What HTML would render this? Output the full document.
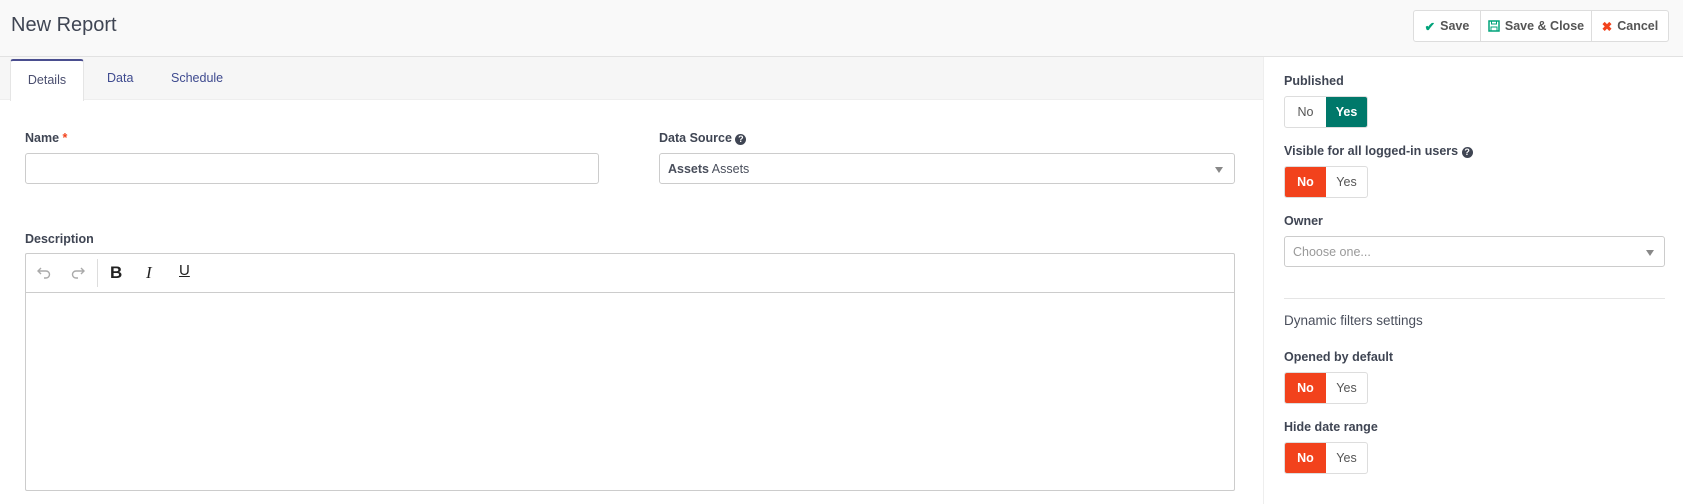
<!DOCTYPE html>
<html><head><style>
*{box-sizing:border-box;margin:0;padding:0}
body{width:1683px;height:504px;overflow:hidden;background:#fff;font-family:"Liberation Sans",sans-serif;color:#4a4f5c;position:relative}
.a{position:absolute}
.lbl{position:absolute;font-size:12.5px;font-weight:bold;color:#3f4553}
.inp{position:absolute;border:1px solid #ccc;border-radius:3px;background:#fff}
.tg{position:absolute;width:84px;height:32px;border:1px solid #ddd;border-radius:3px;display:flex;font-size:12.5px;overflow:hidden}
.tg span{flex:1;display:flex;align-items:center;justify-content:center;color:#555}
.tg .r{background:#f2421c;color:#fff;font-weight:bold}
.tg .g{background:#00786a;color:#fff;font-weight:bold}
.caret{position:absolute;width:0;height:0;border-left:4px solid transparent;border-right:4px solid transparent;border-top:6px solid #888}
.q{display:inline-block;width:11px;height:11px;border-radius:50%;background:#3f4553;color:#fff;font-size:9px;text-align:center;line-height:11px;vertical-align:0}
</style></head><body>
<div class="a" style="left:0;top:0;width:1683px;height:57px;background:#f9f9f9;border-bottom:1px solid #e2e2e2"></div>
<div class="a" style="left:11px;top:14px;font-size:20px;color:#3f4553">New Report</div>
<div class="a" style="left:1413px;top:10px;width:256px;height:32px;border:1px solid #ddd;border-radius:3px;background:#fff;display:flex;font-size:12.5px;font-weight:bold;color:#555">
 <div style="width:67px;border-right:1px solid #ddd;display:flex;align-items:center;justify-content:center"><span style="color:#00a37a;margin-right:5px">✔</span>Save</div>
 <div style="width:111px;border-right:1px solid #ddd;display:flex;align-items:center;justify-content:center"><svg width="12" height="12" viewBox="0 0 12 12" style="margin-right:5px"><rect x="1" y="1" width="10" height="10" fill="none" stroke="#00a37a" stroke-width="1.5"/><rect x="3.5" y="1" width="5" height="3" fill="none" stroke="#00a37a"/><rect x="3" y="7" width="6" height="4" fill="none" stroke="#00a37a"/></svg>Save &amp; Close</div>
 <div style="flex:1;display:flex;align-items:center;justify-content:center"><span style="color:#f2421c;margin-right:5px">✖</span>Cancel</div>
</div>
<div class="a" style="left:0;top:57px;width:1263px;height:43px;background:#f6f6f6;border-bottom:1px solid #eee"></div>
<div class="a" style="left:10px;top:59px;width:74px;height:42px;background:#fff;border:1px solid #e5e5e5;border-bottom:none;border-top:2px solid #4a4e8f;border-radius:3px 3px 0 0;display:flex;align-items:center;justify-content:center;font-size:12.5px;color:#4a4e6f;padding-bottom:2px">Details</div>
<div class="a" style="left:107px;top:71px;font-size:12.5px;color:#3e4a8f">Data</div>
<div class="a" style="left:171px;top:71px;font-size:12.5px;color:#3e4a8f">Schedule</div>
<div class="a" style="left:1263px;top:57px;width:1px;height:447px;background:#eee"></div>

<div class="lbl" style="left:25px;top:131px">Name <span style="color:#f2421c">*</span></div>
<div class="inp" style="left:25px;top:153px;width:574px;height:31px"></div>
<div class="lbl" style="left:659px;top:131px">Data Source <span class="q">?</span></div>
<div class="inp" style="left:659px;top:153px;width:576px;height:31px;font-size:12.5px;padding:8px 0 0 8px"><b>Assets</b> Assets</div>
<div class="caret" style="left:1215px;top:167px"></div>

<div class="lbl" style="left:25px;top:232px">Description</div>
<div class="inp" style="left:25px;top:253px;width:1210px;height:238px;border-radius:2px"></div>
<div class="a" style="left:25px;top:292px;width:1210px;height:1px;background:#ccc"></div>
<div class="a" style="left:97px;top:259px;width:1px;height:28px;background:#ddd"></div>
<svg class="a" style="left:36px;top:265px" width="16" height="14" viewBox="0 0 16 14"><path d="M5 3 L2 6 L5 9 M2 6 H10 A3.5 3.5 0 0 1 10 13 H8" fill="none" stroke="#aaa" stroke-width="1.4"/></svg>
<svg class="a" style="left:70px;top:265px" width="16" height="14" viewBox="0 0 16 14"><path d="M11 3 L14 6 L11 9 M14 6 H6 A3.5 3.5 0 0 0 6 13 H8" fill="none" stroke="#aaa" stroke-width="1.4"/></svg>
<div class="a" style="left:110px;top:263px;font-size:17px;font-weight:bold;color:#222">B</div>
<div class="a" style="left:146px;top:263px;font-size:17px;font-style:italic;font-family:'Liberation Serif',serif;color:#222">I</div>
<div class="a" style="left:179px;top:262px;font-size:15px;text-decoration:underline;color:#222">U</div>

<div class="lbl" style="left:1284px;top:74px">Published</div>
<div class="tg" style="left:1284px;top:96px"><span>No</span><span class="g">Yes</span></div>
<div class="lbl" style="left:1284px;top:144px">Visible for all logged-in users <span class="q">?</span></div>
<div class="tg" style="left:1284px;top:166px"><span class="r">No</span><span>Yes</span></div>
<div class="lbl" style="left:1284px;top:214px">Owner</div>
<div class="inp" style="left:1284px;top:236px;width:381px;height:31px;font-size:12.5px;color:#999;padding:8px 0 0 8px">Choose one...</div>
<div class="caret" style="left:1646px;top:250px"></div>
<div class="a" style="left:1284px;top:298px;width:381px;height:1px;background:#e5e5e5"></div>
<div class="a" style="left:1284px;top:313px;font-size:13.5px;color:#4a4f5c">Dynamic filters settings</div>
<div class="lbl" style="left:1284px;top:350px">Opened by default</div>
<div class="tg" style="left:1284px;top:372px"><span class="r">No</span><span>Yes</span></div>
<div class="lbl" style="left:1284px;top:420px">Hide date range</div>
<div class="tg" style="left:1284px;top:442px"><span class="r">No</span><span>Yes</span></div>
</body></html>
